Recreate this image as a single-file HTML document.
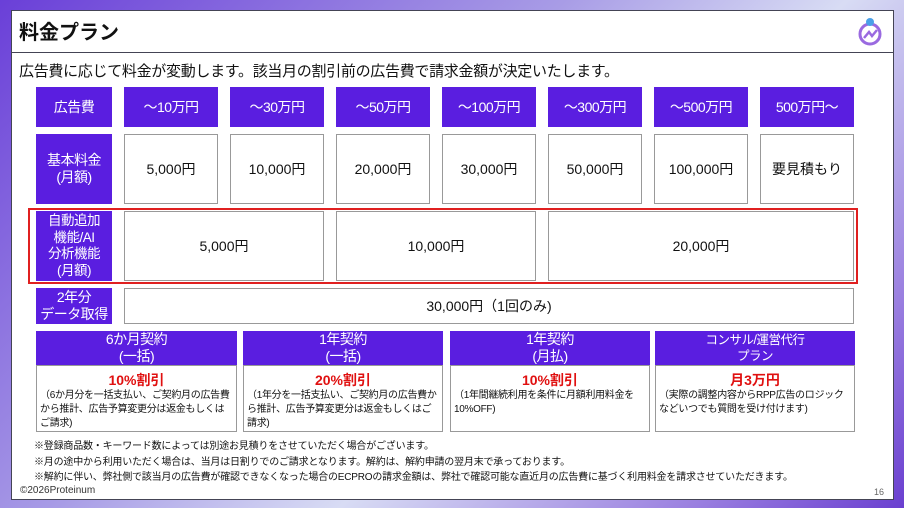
<!DOCTYPE html><html><head><meta charset="utf-8"><style>
*{margin:0;padding:0;box-sizing:border-box}
body{width:904px;height:508px;overflow:hidden;font-family:"Liberation Sans","Noto Sans CJK JP",sans-serif;background:linear-gradient(135deg,#6a3fd8 0%,#a89ce6 40%,#d8dcf4 60%,#9a7fe0 85%,#6a3fd0 100%);position:relative}
.panel{position:absolute;left:11px;top:10px;width:883px;height:490px;background:#fff;border:1px solid #445}
.a{position:absolute}
.p{background:#5a1ee0;color:#fff;display:flex;align-items:center;justify-content:center;text-align:center;font-size:14px;line-height:17px;letter-spacing:-0.5px}
.w{background:#fff;border:1px solid #999;display:flex;align-items:center;justify-content:center;font-size:14px;color:#111}
.note{font-size:10px;color:#111;letter-spacing:-0.2px}
.r{color:#e01010;font-weight:bold;font-size:14px;line-height:17px}
.pb{font-size:10px;line-height:14px;color:#111;text-align:left;letter-spacing:-0.3px}
</style></head><body>
<div class="panel"></div>
<div class="a" style="left:19px;top:16px;font-size:20px;font-weight:bold;color:#111">料金プラン</div>
<div class="a" style="left:11px;top:52px;width:883px;height:1px;background:#445"></div>
<svg class="a" style="left:856px;top:16px" width="28" height="32" viewBox="0 0 28 32"><circle cx="14" cy="18" r="10" fill="none" stroke="#9a6ae0" stroke-width="3"/><path d="M8 22 L13 16 L16 20 L21 14" fill="none" stroke="#9a6ae0" stroke-width="2.5"/><circle cx="14" cy="6" r="4" fill="#4aa0e8"/></svg>
<div class="a" style="left:19px;top:60px;font-size:15px;color:#111;letter-spacing:-0.3px">広告費に応じて料金が変動します。該当月の割引前の広告費で請求金額が決定いたします。</div>
<div class="a p" style="left:36px;top:87px;width:76px;height:40px">広告費</div>
<div class="a p" style="left:124px;top:87px;width:94px;height:40px">～10万円</div>
<div class="a p" style="left:230px;top:87px;width:94px;height:40px">～30万円</div>
<div class="a p" style="left:336px;top:87px;width:94px;height:40px">～50万円</div>
<div class="a p" style="left:442px;top:87px;width:94px;height:40px">～100万円</div>
<div class="a p" style="left:548px;top:87px;width:94px;height:40px">～300万円</div>
<div class="a p" style="left:654px;top:87px;width:94px;height:40px">～500万円</div>
<div class="a p" style="left:760px;top:87px;width:94px;height:40px">500万円～</div>
<div class="a p" style="left:36px;top:134px;width:76px;height:70px">基本料金<br>(月額)</div>
<div class="a w" style="left:124px;top:134px;width:94px;height:70px">5,000円</div>
<div class="a w" style="left:230px;top:134px;width:94px;height:70px">10,000円</div>
<div class="a w" style="left:336px;top:134px;width:94px;height:70px">20,000円</div>
<div class="a w" style="left:442px;top:134px;width:94px;height:70px">30,000円</div>
<div class="a w" style="left:548px;top:134px;width:94px;height:70px">50,000円</div>
<div class="a w" style="left:654px;top:134px;width:94px;height:70px">100,000円</div>
<div class="a w" style="left:760px;top:134px;width:94px;height:70px">要見積もり</div>
<div class="a p" style="left:36px;top:211px;width:76px;height:70px;font-size:13.5px;line-height:16.5px">自動追加<br>機能/AI<br>分析機能<br>(月額)</div>
<div class="a w" style="left:124px;top:211px;width:200px;height:70px">5,000円</div>
<div class="a w" style="left:336px;top:211px;width:200px;height:70px">10,000円</div>
<div class="a w" style="left:548px;top:211px;width:306px;height:70px">20,000円</div>
<div class="a" style="left:28px;top:208px;width:830px;height:76px;border:2.5px solid #e02020"></div>
<div class="a p" style="left:36px;top:288px;width:76px;height:36px">2年分<br>データ取得</div>
<div class="a w" style="left:124px;top:288px;width:730px;height:36px">30,000円（1回のみ)</div>
<div class="a p" style="left:36px;top:331px;width:201px;height:34px">6か月契約<br>(一括)</div>
<div class="a p" style="left:243px;top:331px;width:200px;height:34px">1年契約<br>(一括)</div>
<div class="a p" style="left:450px;top:331px;width:200px;height:34px">1年契約<br>(月払)</div>
<div class="a p" style="left:655px;top:331px;width:200px;height:34px;font-size:12.5px;line-height:16px">コンサル/運営代行<br>プラン</div>
<div class="a w" style="left:36px;top:365px;width:201px;height:67px;display:block;padding:6px 3px;text-align:center"><div class="r">10%割引</div><div class="pb">（6か月分を一括支払い、ご契約月の広告費から推計、広告予算変更分は返金もしくはご請求)</div></div>
<div class="a w" style="left:243px;top:365px;width:200px;height:67px;display:block;padding:6px 3px;text-align:center"><div class="r">20%割引</div><div class="pb">（1年分を一括支払い、ご契約月の広告費から推計、広告予算変更分は返金もしくはご請求)</div></div>
<div class="a w" style="left:450px;top:365px;width:200px;height:67px;display:block;padding:6px 3px;text-align:center"><div class="r">10%割引</div><div class="pb">（1年間継続利用を条件に月額利用料金を10%OFF)</div></div>
<div class="a w" style="left:655px;top:365px;width:200px;height:67px;display:block;padding:6px 3px;text-align:center"><div class="r">月3万円</div><div class="pb">（実際の調整内容からRPP広告のロジックなどいつでも質問を受け付けます)</div></div>
<div class="a note" style="left:34px;top:437px">※登録商品数・キーワード数によっては別途お見積りをさせていただく場合がございます。</div>
<div class="a note" style="left:34px;top:453px">※月の途中から利用いただく場合は、当月は日割りでのご請求となります。解約は、解約申請の翌月末で承っております。</div>
<div class="a note" style="left:34px;top:468px">※解約に伴い、弊社側で該当月の広告費が確認できなくなった場合のECPROの請求金額は、弊社で確認可能な直近月の広告費に基づく利用料金を請求させていただきます。</div>
<div class="a" style="left:20px;top:485px;font-size:10px;color:#333">©2026Proteinum</div>
<div class="a" style="left:874px;top:487px;font-size:9px;color:#666">16</div>
</body></html>
